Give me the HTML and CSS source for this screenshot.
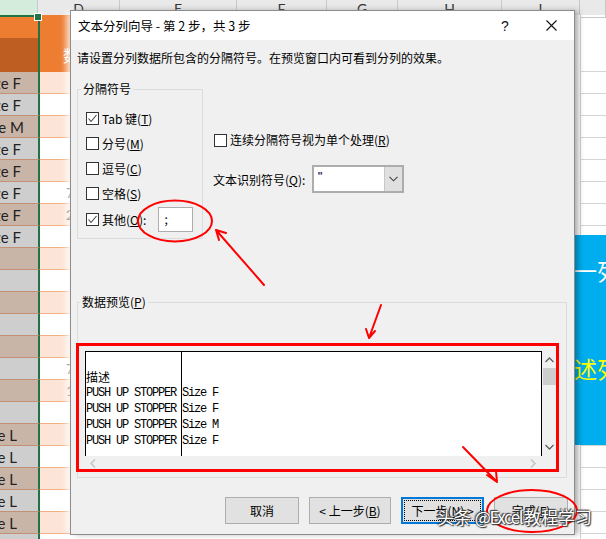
FILE: index.html
```html
<!DOCTYPE html>
<html lang="zh-CN">
<head>
<meta charset="utf-8">
<title>文本分列向导</title>
<link rel="stylesheet" href="styles.css">
</head>
<body>
<div class="sheet">
  <div class="hrow">
    <div class="hc sel"></div><div class="hc">D</div><div class="hc">E</div><div class="hc">F</div><div class="hc">G</div><div class="hc">H</div><div class="hc">I</div><div class="hc"></div>
  </div>
  <div class="row r1"><div class="c"></div><div class="d"></div><div class="m"></div><div class="j"></div></div>
  <div class="row r2"><div class="c"></div><div class="d">数据</div><div class="m"></div><div class="j"></div></div>
  <div class="row ev"><div class="c f">Size F</div><div class="d"></div><div class="m"></div><div class="j"></div></div>
  <div class="row od"><div class="c f">Size F</div><div class="d"></div><div class="m"></div><div class="j"></div></div>
  <div class="row ev"><div class="c mm">Size M</div><div class="d"></div><div class="m"></div><div class="j"></div></div>
  <div class="row od"><div class="c f">Size F</div><div class="d"></div><div class="m"></div><div class="j"></div></div>
  <div class="row ev"><div class="c f">Size F</div><div class="d"></div><div class="m"></div><div class="j"></div></div>
  <div class="row od"><div class="c f">Size F</div><div class="d">72</div><div class="m"></div><div class="j"></div></div>
  <div class="row ev"><div class="c f">Size F</div><div class="d">25</div><div class="m"></div><div class="j"></div></div>
  <div class="row od"><div class="c f">Size F</div><div class="d"></div><div class="m"></div><div class="j"></div></div>
  <div class="row ev"><div class="c"></div><div class="d"></div><div class="m"></div><div class="j"></div></div>
  <div class="row od"><div class="c"></div><div class="d"></div><div class="m"></div><div class="j"></div></div>
  <div class="row ev"><div class="c"></div><div class="d"></div><div class="m"></div><div class="j"></div></div>
  <div class="row od"><div class="c"></div><div class="d"></div><div class="m"></div><div class="j"></div></div>
  <div class="row ev"><div class="c"></div><div class="d"></div><div class="m"></div><div class="j"></div></div>
  <div class="row od"><div class="c"></div><div class="d">74</div><div class="m"></div><div class="j"></div></div>
  <div class="row ev"><div class="c"></div><div class="d">13</div><div class="m"></div><div class="j"></div></div>
  <div class="row od"><div class="c"></div><div class="d"></div><div class="m"></div><div class="j"></div></div>
  <div class="row ev"><div class="c l">Size L</div><div class="d"></div><div class="m"></div><div class="j"></div></div>
  <div class="row od"><div class="c l">Size L</div><div class="d"></div><div class="m"></div><div class="j"></div></div>
  <div class="row ev"><div class="c l">Size L</div><div class="d"></div><div class="m"></div><div class="j"></div></div>
  <div class="row od"><div class="c l">Size L</div><div class="d"></div><div class="m"></div><div class="j"></div></div>
  <div class="row ev"><div class="c l">Size L</div><div class="d"></div><div class="m"></div><div class="j"></div></div>
  <div class="row od"><div class="c"></div><div class="d"></div><div class="m"></div><div class="j"></div></div>
</div>

<div class="banner">
  <div class="bl1">一列</div>
  <div class="bl2">述列</div>
</div>

<div class="dialog">
  <div class="titlebar">
    <span class="title">文本分列向导 - 第 2 步，共 3 步</span>
    <span class="tbtn help">?</span>
    <span class="tbtn close"><svg width="11" height="11" viewBox="0 0 11 11"><path d="M0.5 0.5 L10.5 10.5 M10.5 0.5 L0.5 10.5" stroke="#111" stroke-width="1.1" fill="none"/></svg></span>
  </div>
  <div class="body">
    <p class="intro">请设置分列数据所包含的分隔符号。在预览窗口内可看到分列的效果。</p>
    <div class="opts">
      <fieldset class="delims">
        <legend>分隔符号</legend>
        <div class="chk"><span class="box on"><svg width="11" height="11" viewBox="0 0 11 11"><path d="M1.5 5.5 L4 8.5 L9.5 2" stroke="#444" stroke-width="1.1" fill="none"/></svg></span>Tab 键(<u>T</u>)</div>
        <div class="chk"><span class="box"></span>分号(<u>M</u>)</div>
        <div class="chk"><span class="box"></span>逗号(<u>C</u>)</div>
        <div class="chk"><span class="box"></span>空格(<u>S</u>)</div>
        <div class="chk other"><span class="box on"><svg width="11" height="11" viewBox="0 0 11 11"><path d="M1.5 5.5 L4 8.5 L9.5 2" stroke="#444" stroke-width="1.1" fill="none"/></svg></span>其他(<u>O</u>):<span class="otherin">;</span></div>
      </fieldset>
      <div class="right">
        <div class="chk cons"><span class="box"></span>连续分隔符号视为单个处理(<u>R</u>)</div>
        <div class="qual">
          <span>文本识别符号(<u>Q</u>):</span>
          <div class="combo"><span class="val">"</span><span class="drop"><svg width="9" height="6" viewBox="0 0 9 6"><path d="M0.5 0.8 L4.5 4.8 L8.5 0.8" stroke="#444" stroke-width="1.1" fill="none"/></svg></span></div>
        </div>
      </div>
    </div>
    <fieldset class="preview">
      <legend>数据预览(<u>P</u>)</legend>
      <div class="pv">
        <div class="pgrid">
          <div class="pcol p1">
            <div class="pr cjk">描述</div>
            <div class="pr">PUSH UP STOPPER</div>
            <div class="pr">PUSH UP STOPPER</div>
            <div class="pr">PUSH UP STOPPER</div>
            <div class="pr">PUSH UP STOPPER</div>
          </div>
          <div class="pcol p2">
            <div class="pr"></div>
            <div class="pr">Size F</div>
            <div class="pr">Size F</div>
            <div class="pr">Size M</div>
            <div class="pr">Size F</div>
          </div>
        </div>
        <div class="vs">
          <svg width="9" height="6" viewBox="0 0 9 6"><path d="M0.5 5 L4.5 1 L8.5 5" stroke="#606060" stroke-width="1.3" fill="none"/></svg>
          <span class="thumb"></span>
          <span class="vfill"></span>
          <svg width="9" height="6" viewBox="0 0 9 6"><path d="M0.5 1 L4.5 5 L8.5 1" stroke="#606060" stroke-width="1.3" fill="none"/></svg>
        </div>
        <div class="hs">
          <svg width="6" height="9" viewBox="0 0 6 9"><path d="M5 0.5 L1 4.5 L5 8.5" stroke="#c2c2c2" stroke-width="1.5" fill="none"/></svg>
          <svg width="6" height="9" viewBox="0 0 6 9"><path d="M1 0.5 L5 4.5 L1 8.5" stroke="#c2c2c2" stroke-width="1.5" fill="none"/></svg>
        </div>
        <div class="corner"></div>
      </div>
    </fieldset>
    <div class="buttons">
      <span class="btn w74">取消</span>
      <span class="btn w82">&lt; 上一步(<u>B</u>)</span>
      <span class="btn w83 default">下一步(<u>N</u>) &gt;</span>
      <span class="btn w74">完成(<u>F</u>)</span>
    </div>
  </div>
</div>

<svg class="marks" width="606" height="539" viewBox="0 0 606 539">
  <g fill="none" stroke="#f00" stroke-linecap="round" stroke-linejoin="round">
    <ellipse cx="175" cy="221" rx="37" ry="20.5" stroke-width="2"/>
    <path d="M264 285 L216 230 M216 230 L219 240 M216 230 L226 233" stroke-width="2"/>
    <rect x="77.5" y="344.5" width="480" height="126" stroke-width="3" stroke-linecap="butt" stroke-linejoin="miter"/>
    <path d="M381 305 L369 338 M369 338 L366 329 M369 338 L375 331" stroke-width="2"/>
    <path d="M463 447 L497 482 M497 482 L487 475 M497 482 L496 471" stroke-width="2"/>
    <ellipse cx="532" cy="511" rx="45" ry="21" stroke-width="2"/>
  </g>
</svg>

<div class="watermark">头条 <span class="wl">@Excel</span>教程学习</div>
</body>
</html>
```

FILE: styles.css
```css
html, body {
  margin: 0;
  padding: 0;
  width: 606px;
  height: 539px;
  overflow: hidden;
  background: #fff;
}
body {
  position: relative;
  font-family: "Noto Sans CJK SC", sans-serif;
}

/* ---------- spreadsheet ---------- */
.sheet {
  display: flex;
  flex-direction: column;
  font-family: Lato, "Liberation Sans", sans-serif;
}
.hrow {
  display: grid;
  grid-template-columns: 38px 82px 117px 90px 71px 104px 78px 1fr;
  height: 15px;
  background: #e9e9e9;
}
.hc {
  border-right: 1px solid #c8c8c8;
  border-bottom: 1px solid #c8c8c8;
  box-sizing: border-box;
  text-align: center;
  font-size: 14px;
  line-height: 17px;
  color: #333;
}
.hc.sel { background: #d3ecdb; border-bottom: 1px solid #d3ecdb; }

.row {
  display: grid;
  grid-template-columns: 40px 80px 460px 1fr;
  height: 22px;
}
.row > div { box-sizing: border-box; overflow: hidden; white-space: nowrap; }
.row .c {
  border-right: 2px solid #217346;
  font-size: 15px;
  line-height: 22px;
  color: #222;
  display: flex;
  justify-content: flex-end;
}
.row .c.f { padding-right: 17px; }
.row .c.mm { padding-right: 14px; }
.row .c.l { padding-right: 21px; }
.row .d {
  font-size: 14px;
  line-height: 22px;
  padding-left: 26px;
  color: #333;
}
.row .m { background: #fff; }
.row .j { border-left: 1px solid #d4d4d4; border-bottom: 1px solid #d4d4d4; }

.r1 { height: 23px; }
.r1 .c { background: #ed7d31; box-shadow: inset 0 2px #217346; position: relative; }
.row.r1 > .c { overflow: visible; }
.r1 .c::after {
  content: "";
  position: absolute;
  right: -4px;
  top: -2px;
  width: 6px;
  height: 6px;
  background: #217346;
  border: 1px solid #fff;
}
.r1 .d { background: #ed7d31; }
.r1 .j { border-bottom: none; }
.r2 { height: 34px; }
.r2 .c { background: #bf5e22; }
.r2 .d { background: #ed7d31; color: #fff; font-size: 16px; line-height: 34px; padding-left: 23px; font-family: "Noto Sans CJK SC", sans-serif; }

.ev .c { background: #c8b5a8; border-bottom: 1px solid #c39075; }
.od .c { background: #cecece; border-bottom: 1px solid #c39075; }
.ev .d { background: #fce4d6; border-bottom: 1px solid #f4b084; }
.od .d { background: #fff; border-bottom: 1px solid #f4b084; }

/* text box shape on the sheet */
.banner {
  position: absolute;
  left: 528px;
  top: 235px;
  width: 78px;
  height: 210px;
  background: #00aeef;
  overflow: hidden;
  white-space: nowrap;
  padding-left: 46px;
  box-sizing: border-box;
  font-size: 23px;
  line-height: 30px;
}
.bl1 { color: #fff; margin-top: 20px; }
.bl2 { color: #ffff00; margin-top: 68px; }

/* ---------- dialog ---------- */
.dialog {
  position: absolute;
  left: 70px;
  top: 10px;
  width: 505px;
  height: 525px;
  box-sizing: border-box;
  border: 1px solid #8c8c8c;
  background: #f0f0f0;
  box-shadow: 4px 0 6px -1px rgba(0,0,0,0.35), -6px 0 6px -2px rgba(255,255,255,0.75);
  font-size: 12px;
  color: #000;
  display: flex;
  flex-direction: column;
}
.titlebar {
  height: 29px;
  background: #fff;
  display: flex;
  align-items: center;
}
.title {
  flex: 1;
  padding-left: 7px;
  font-size: 12.5px;
  line-height: 29px;
}
.tbtn {
  width: 46px;
  height: 29px;
  display: flex;
  align-items: center;
  justify-content: center;
}
.help { font-family: "Liberation Sans", sans-serif; font-size: 14px; color: #111; }

.body {
  padding: 10px 7px 0 6px;
  display: flex;
  flex-direction: column;
}
.intro {
  margin: 0;
  line-height: 16px;
}
u { text-decoration: underline; text-underline-offset: 1px; }

.opts {
  display: flex;
  margin-top: 15px;
}
fieldset {
  margin: 0;
  min-width: 0;
  border: 1px solid #dcdcdc;
  box-sizing: border-box;
}
legend {
  padding: 0 2px;
  margin-left: -5px;
  line-height: 16px;
  font-size: 12px;
}
.delims {
  width: 126px;
  padding: 9px 4px 5px 8px;
}
.chk {
  display: flex;
  align-items: center;
  height: 25px;
  line-height: 16px;
  white-space: nowrap;
}
.box {
  width: 13px;
  height: 13px;
  box-sizing: border-box;
  border: 1px solid #333;
  background: #fff;
  margin-right: 3px;
  display: flex;
  align-items: center;
  justify-content: center;
  flex: none;
}
.chk.other { height: 27px; }
.otherin {
  width: 35px;
  height: 25px;
  box-sizing: border-box;
  border: 1px solid #adadad;
  background: #fff;
  margin-left: 12px;
  padding-left: 5px;
  line-height: 22px;
}

.right {
  margin-left: 10px;
  padding-top: 51px;
  display: flex;
  flex-direction: column;
}
.chk.cons { height: 16px; }
.chk.cons .box { margin-left: 1px; }
.qual {
  margin-top: 17px;
  display: flex;
  align-items: center;
  height: 28px;
}
.combo {
  margin-left: 7px;
  width: 92px;
  height: 28px;
  box-sizing: border-box;
  border: 2px solid #adadad;
  background: #fff;
  display: flex;
}
.combo .val {
  flex: 1;
  padding-left: 3px;
  line-height: 18px;
  color: #3a2a70;
  font-family: "Liberation Sans", sans-serif;
  font-weight: bold;
  font-size: 11px;
}
.combo .drop {
  width: 17px;
  background: #e0e0e0;
  border-left: 1px solid #c8c8c8;
  display: flex;
  align-items: center;
  justify-content: center;
}

.preview {
  margin-top: 55px;
  padding: 41px 9px 6px 7px;
}
.pv {
  display: grid;
  grid-template-columns: 457px 15px;
  grid-template-rows: 105px 15px;
}
.pgrid {
  background: #fff;
  border: 1px solid #000;
  border-bottom: none;
  display: flex;
  font-family: "Liberation Mono", "Noto Sans CJK SC", monospace;
  font-size: 12px;
  letter-spacing: -1.2px;
  overflow: hidden;
}
.pcol { padding-top: 17px; }
.p1 { width: 96px; border-right: 1px solid #000; box-sizing: border-box; }
.p2 { flex: 1; }
.pr { height: 16px; line-height: 16px; white-space: nowrap; }
.pr.cjk { font-family: "Noto Sans CJK SC", sans-serif; font-size: 12px; letter-spacing: 0; }

.vs {
  background: #f0f0f0;
  display: flex;
  flex-direction: column;
  align-items: center;
  padding: 6px 0 6px 0;
  box-sizing: border-box;
}
.thumb {
  width: 13px;
  height: 17px;
  margin-top: 5px;
  background: #cdcdcd;
}
.vfill { flex: 1; }
.hs {
  background: #f0f0f0;
  display: flex;
  align-items: center;
  justify-content: space-between;
  padding: 0 6px 0 5px;
}
.corner { background: #f0f0f0; }

.buttons {
  display: flex;
  justify-content: flex-end;
  gap: 10px;
  margin-top: 19px;
  margin-right: -1px;
}
.btn {
  height: 27px;
  box-sizing: border-box;
  border: 1px solid #adadad;
  background: #e1e1e1;
  display: flex;
  align-items: center;
  justify-content: center;
  line-height: 16px;
  white-space: nowrap;
}
.w74 { width: 74px; }
.w82 { width: 82px; }
.w83 { width: 83px; }
.btn.default {
  border: 2px solid #0078d7;
  outline: 1px dotted #000;
  outline-offset: -4px;
}

/* ---------- overlay annotations ---------- */
.marks {
  position: absolute;
  left: 0;
  top: 0;
  pointer-events: none;
}
.watermark {
  position: absolute;
  left: 437px;
  top: 505px;
  font-size: 17px;
  line-height: 24px;
  color: #fff;
  white-space: nowrap;
  text-shadow: 0 0 2px #222, 1px 1px 1px #333, -1px -1px 1px #444;
}
.wl { letter-spacing: -1.5px; margin-right: 2px; }
```
